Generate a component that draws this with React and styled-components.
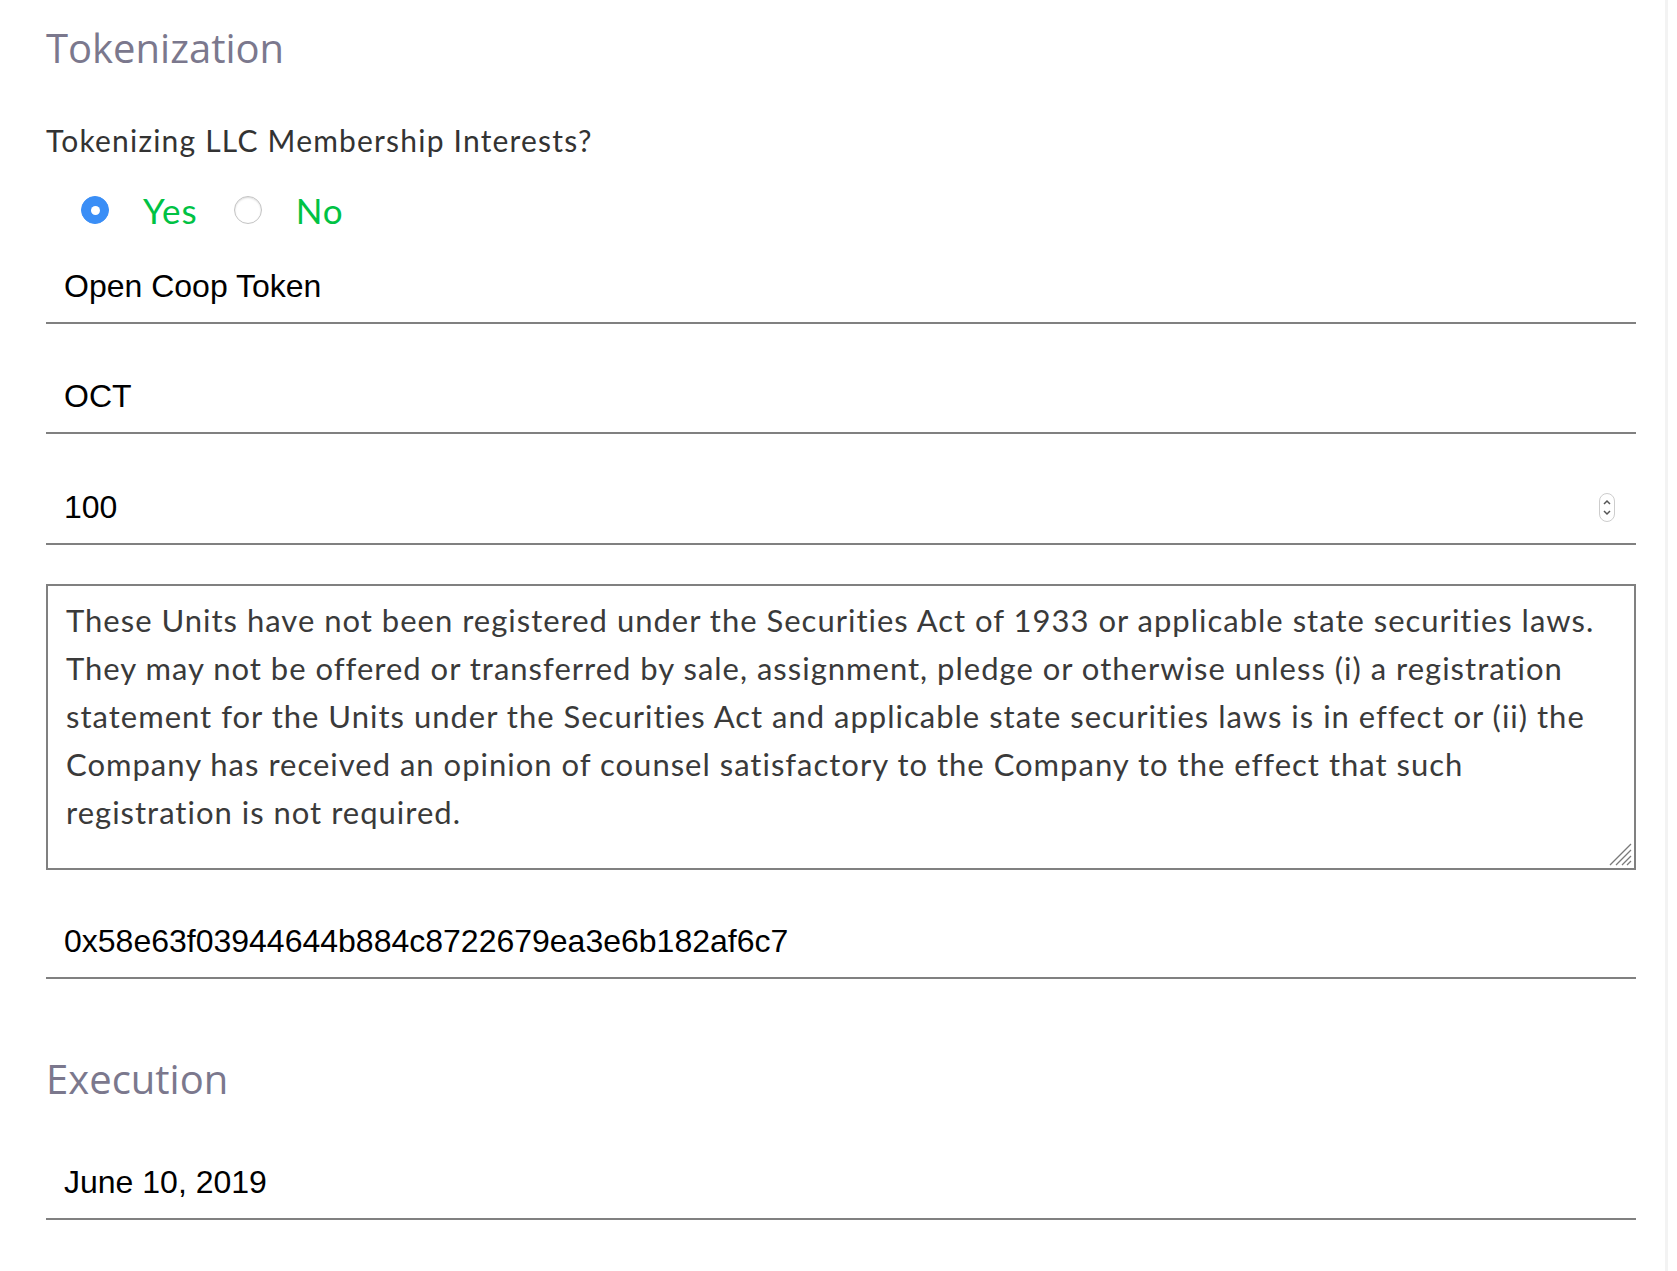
import React from "react";
import styled, { createGlobalStyle } from "styled-components";

const GlobalStyle = createGlobalStyle`
  html, body {
    margin: 0;
    padding: 0;
    background: #fff;
  }
`;

const Page = styled.div`
  width: 1668px;
  min-height: 1271px;
  box-sizing: border-box;
  border-right: 3px solid #f3f3f3;
  padding: 8px 32px 0 46px;
`;

const Form = styled.form`
  display: flex;
  flex-direction: column;
  width: 1590px;
`;

const SectionTitle = styled.h2`
  margin: ${(p) => p.$top || 0}px 0 0 0;
  font-family: "Open Sans", sans-serif;
  font-weight: 400;
  font-size: 40px;
  line-height: 80px;
  height: 80px;
  color: #7b788d;
`;

const Question = styled.div`
  margin-top: 32px;
  font-family: Lato, sans-serif;
  font-size: 30px;
  letter-spacing: 1.2px;
  line-height: 40px;
  color: #333;
`;

const RadioRow = styled.div`
  display: flex;
  align-items: center;
  gap: 36px;
  margin: 18px 0 0 35px;
  height: 64px;
`;

const Choice = styled.label`
  display: flex;
  align-items: center;
  gap: 34px;
  font-family: Lato, sans-serif;
  font-size: 35px;
  letter-spacing: 1px;
  color: #00c244;
`;

const Radio = styled.input.attrs({ type: "radio" })`
  appearance: none;
  margin: 0;
  width: 28px;
  height: 28px;
  border-radius: 50%;
  background: #fff;
  border: 1px solid #c4c4c4;
  box-shadow: inset 0 1px 2px rgba(0, 0, 0, 0.15);
  box-sizing: border-box;
  display: grid;
  place-items: center;

  &:checked {
    background: #3a8ef6;
    border-color: #3a8ef6;
    box-shadow: none;
  }
  &:checked::after {
    content: "";
    width: 9px;
    height: 9px;
    border-radius: 50%;
    background: #fff;
  }
`;

const FieldWrap = styled.div`
  position: relative;
  margin-top: ${(p) => p.$top}px;
`;

const Field = styled.input`
  display: block;
  width: 100%;
  height: 74px;
  box-sizing: border-box;
  border: none;
  border-bottom: 2px solid #808080;
  padding: 0 18px;
  font-family: "Liberation Sans", Arial, sans-serif;
  font-size: 32px;
  color: #000;
  background: transparent;
  outline: none;

  &::-webkit-inner-spin-button,
  &::-webkit-outer-spin-button {
    -webkit-appearance: none;
    margin: 0;
  }
`;

const Spinner = styled.svg`
  position: absolute;
  right: 20px;
  top: 21px;
  pointer-events: none;
`;

const Legend = styled.textarea`
  display: block;
  width: 100%;
  height: 286px;
  box-sizing: border-box;
  border: 2px solid #808080;
  padding: 10px 18px;
  font-family: Lato, sans-serif;
  font-size: 31px;
  letter-spacing: 1px;
  line-height: 48px;
  color: #3a3a3a;
  resize: none;
  outline: none;
`;

const Grip = styled.svg`
  position: absolute;
  right: 4px;
  bottom: 4px;
  pointer-events: none;
`;

const legendText =
  "These Units have not been registered under the Securities Act of 1933 or applicable state securities laws. They may not be offered or transferred by sale, assignment, pledge or otherwise unless (i) a registration statement for the Units under the Securities Act and applicable state securities laws is in effect or (ii) the Company has received an opinion of counsel satisfactory to the Company to the effect that such registration is not required.";

export default function App() {
  return (
    <>
      <GlobalStyle />
      <Page>
        <Form onSubmit={(e) => e.preventDefault()}>
          <SectionTitle>Tokenization</SectionTitle>
          <Question>Tokenizing LLC Membership Interests?</Question>
          <RadioRow>
            <Choice>
              <Radio name="tokenize" defaultChecked />
              Yes
            </Choice>
            <Choice>
              <Radio name="tokenize" />
              No
            </Choice>
          </RadioRow>
          <FieldWrap $top={8}>
            <Field type="text" defaultValue="Open Coop Token" />
          </FieldWrap>
          <FieldWrap $top={36}>
            <Field type="text" defaultValue="OCT" />
          </FieldWrap>
          <FieldWrap $top={37}>
            <Field type="number" defaultValue="100" />
            <Spinner width="18" height="32" viewBox="0 0 18 32">
              <rect x="1.5" y="1.5" width="15" height="28" rx="7.5" fill="#fff" stroke="#cdcdcd" />
              <path d="M6 12 L9 9 L12 12" fill="none" stroke="#555" strokeWidth="1.5" />
              <path d="M6 19 L9 22 L12 19" fill="none" stroke="#555" strokeWidth="1.5" />
            </Spinner>
          </FieldWrap>
          <FieldWrap $top={39}>
            <Legend defaultValue={legendText} />
            <Grip width="24" height="24" viewBox="0 0 24 24">
              <path d="M2 23 L23 2 M8 23 L23 8 M14 23 L23 14 M19 23 L23 19" stroke="#7a7a7a" strokeWidth="1.3" />
            </Grip>
          </FieldWrap>
          <FieldWrap $top={35}>
            <Field type="text" defaultValue="0x58e63f03944644b884c8722679ea3e6b182af6c7" />
          </FieldWrap>
          <SectionTitle $top={60}>Execution</SectionTitle>
          <FieldWrap $top={27}>
            <Field type="text" defaultValue="June 10, 2019" />
          </FieldWrap>
        </Form>
      </Page>
    </>
  );
}
